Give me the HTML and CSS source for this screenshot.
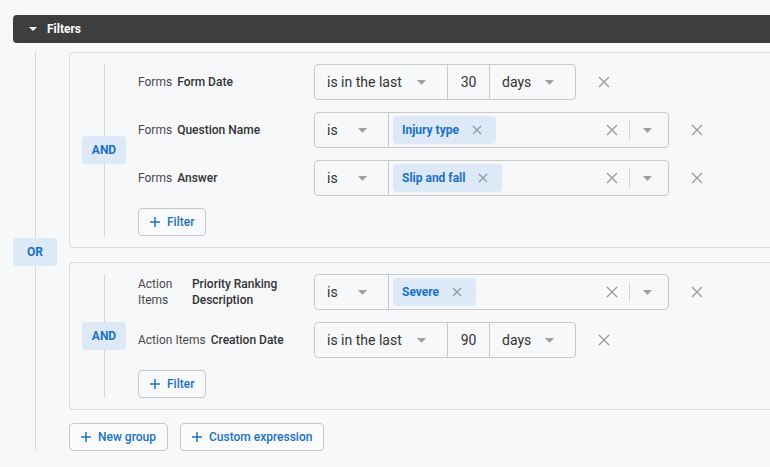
FILE: index.html
```html
<!DOCTYPE html>
<html>
<head>
<meta charset="utf-8">
<link rel="stylesheet" href="styles.css">
</head>
<body>
<div class="page">
  <div class="header">
    <svg class="hcaret" width="8" height="4" viewBox="0 0 8 4"><path d="M0 0h8L4 4z" fill="#fff"/></svg>
    <span>Filters</span>
  </div>
  <div class="main">
    <div class="or-col"><div class="badge">OR</div></div>
    <div class="groups">
      <div class="group">
        <div class="and-col"><div class="badge">AND</div></div>
        <div class="rows">
          <div class="row">
            <div class="label"><span class="ent">Forms</span><span class="fld">Form Date</span></div>
            <div class="controls">
              <div class="box sel w-last"><span class="val">is in the last</span><svg class="caret" width="9" height="5" viewBox="0 0 9 5"><path d="M0 0h9L4.5 5z"/></svg></div>
              <div class="box num">30</div>
              <div class="box sel w-days"><span class="val">days</span><svg class="caret" width="9" height="5" viewBox="0 0 9 5"><path d="M0 0h9L4.5 5z"/></svg></div>
            </div>
            <svg class="remove" width="12" height="12" viewBox="0 0 12 12"><path d="M1 1l10 10M11 1L1 11"/></svg>
          </div>
          <div class="row">
            <div class="label"><span class="ent">Forms</span><span class="fld">Question Name</span></div>
            <div class="controls">
              <div class="box sel w-is"><span class="val">is</span><svg class="caret" width="9" height="5" viewBox="0 0 9 5"><path d="M0 0h9L4.5 5z"/></svg></div>
              <div class="box multi">
                <div class="tag"><span>Injury type</span><svg class="tagx" width="10" height="10" viewBox="0 0 10 10"><path d="M1 1l8 8M9 1L1 9"/></svg></div>
                <div class="spacer"></div>
                <svg class="clear" width="12" height="12" viewBox="0 0 12 12"><path d="M1 1l10 10M11 1L1 11"/></svg>
                <div class="divider"></div>
                <svg class="caret mcaret" width="9" height="5" viewBox="0 0 9 5"><path d="M0 0h9L4.5 5z"/></svg>
              </div>
            </div>
            <svg class="remove" width="12" height="12" viewBox="0 0 12 12"><path d="M1 1l10 10M11 1L1 11"/></svg>
          </div>
          <div class="row">
            <div class="label"><span class="ent">Forms</span><span class="fld">Answer</span></div>
            <div class="controls">
              <div class="box sel w-is"><span class="val">is</span><svg class="caret" width="9" height="5" viewBox="0 0 9 5"><path d="M0 0h9L4.5 5z"/></svg></div>
              <div class="box multi">
                <div class="tag"><span>Slip and fall</span><svg class="tagx" width="10" height="10" viewBox="0 0 10 10"><path d="M1 1l8 8M9 1L1 9"/></svg></div>
                <div class="spacer"></div>
                <svg class="clear" width="12" height="12" viewBox="0 0 12 12"><path d="M1 1l10 10M11 1L1 11"/></svg>
                <div class="divider"></div>
                <svg class="caret mcaret" width="9" height="5" viewBox="0 0 9 5"><path d="M0 0h9L4.5 5z"/></svg>
              </div>
            </div>
            <svg class="remove" width="12" height="12" viewBox="0 0 12 12"><path d="M1 1l10 10M11 1L1 11"/></svg>
          </div>
          <div class="btn-row">
            <button class="btn"><svg class="plus" width="10" height="10" viewBox="0 0 10 10"><path d="M5 0v10M0 5h10"/></svg><span>Filter</span></button>
          </div>
        </div>
      </div>

      <div class="group">
        <div class="and-col"><div class="badge">AND</div></div>
        <div class="rows">
          <div class="row">
            <div class="label"><span class="ent">Action Items</span><span class="fld">Priority Ranking Description</span></div>
            <div class="controls">
              <div class="box sel w-is"><span class="val">is</span><svg class="caret" width="9" height="5" viewBox="0 0 9 5"><path d="M0 0h9L4.5 5z"/></svg></div>
              <div class="box multi">
                <div class="tag"><span>Severe</span><svg class="tagx" width="10" height="10" viewBox="0 0 10 10"><path d="M1 1l8 8M9 1L1 9"/></svg></div>
                <div class="spacer"></div>
                <svg class="clear" width="12" height="12" viewBox="0 0 12 12"><path d="M1 1l10 10M11 1L1 11"/></svg>
                <div class="divider"></div>
                <svg class="caret mcaret" width="9" height="5" viewBox="0 0 9 5"><path d="M0 0h9L4.5 5z"/></svg>
              </div>
            </div>
            <svg class="remove" width="12" height="12" viewBox="0 0 12 12"><path d="M1 1l10 10M11 1L1 11"/></svg>
          </div>
          <div class="row">
            <div class="label"><span class="ent">Action Items</span><span class="fld">Creation Date</span></div>
            <div class="controls">
              <div class="box sel w-last"><span class="val">is in the last</span><svg class="caret" width="9" height="5" viewBox="0 0 9 5"><path d="M0 0h9L4.5 5z"/></svg></div>
              <div class="box num">90</div>
              <div class="box sel w-days"><span class="val">days</span><svg class="caret" width="9" height="5" viewBox="0 0 9 5"><path d="M0 0h9L4.5 5z"/></svg></div>
            </div>
            <svg class="remove" width="12" height="12" viewBox="0 0 12 12"><path d="M1 1l10 10M11 1L1 11"/></svg>
          </div>
          <div class="btn-row">
            <button class="btn"><svg class="plus" width="10" height="10" viewBox="0 0 10 10"><path d="M5 0v10M0 5h10"/></svg><span>Filter</span></button>
          </div>
        </div>
      </div>

      <div class="actions">
        <button class="btn"><svg class="plus" width="10" height="10" viewBox="0 0 10 10"><path d="M5 0v10M0 5h10"/></svg><span>New group</span></button>
        <button class="btn"><svg class="plus" width="10" height="10" viewBox="0 0 10 10"><path d="M5 0v10M0 5h10"/></svg><span>Custom expression</span></button>
      </div>
    </div>
  </div>
</div>
</body>
</html>
```
FILE: styles.css
```css
html, body {
  margin: 0;
  padding: 0;
  overflow: hidden;
  background: #f7f8fa;
}
body {
  font-family: Roboto, "Liberation Sans", Arial, sans-serif;
  color: #333;
}
.page {
  width: 820px;
  padding: 15px 0 0 13px;
}
.header {
  height: 28px;
  background: #3d3e40;
  border-radius: 4px 0 0 4px;
  display: flex;
  align-items: center;
  color: #fff;
  font-size: 12px;
  font-weight: 700;
  padding-left: 16px;
}
.hcaret {
  margin-right: 10px;
}
.main {
  display: flex;
  gap: 12px;
  margin-top: 9px;
}
.or-col {
  width: 44px;
  flex: none;
  display: flex;
  align-items: center;
  justify-content: center;
  background: linear-gradient(#d5d6d8, #d5d6d8) center / 1px 100% no-repeat;
}
.badge {
  width: 44px;
  height: 28px;
  border-radius: 4px;
  background: #dde9f6;
  color: #1a71c6;
  font-size: 12px;
  font-weight: 700;
  display: flex;
  align-items: center;
  justify-content: center;
}
.groups {
  flex: 1;
  display: flex;
  flex-direction: column;
  gap: 13px;
}
.group + .group {
  margin-top: 1px;
}
.group {
  border: 1px solid #dbdcde;
  border-right: none;
  border-radius: 4px 0 0 4px;
  padding: 11px 0 11px 12px;
  display: flex;
  gap: 12px;
}
.and-col {
  width: 44px;
  flex: none;
  display: flex;
  align-items: center;
  background: linear-gradient(#d5d6d8, #d5d6d8) center / 1px 100% no-repeat;
}
.rows {
  display: flex;
  flex-direction: column;
  gap: 12px;
}
.row {
  display: flex;
  align-items: center;
  height: 36px;
}
.label {
  width: 162px;
  margin-right: 14px;
  display: flex;
  align-items: center;
  gap: 5px;
  font-size: 12px;
  line-height: 16px;
}
.ent {
  color: #4a4a4a;
}
.fld {
  color: #333;
  font-weight: 500;
}
.controls {
  display: flex;
  height: 36px;
}
.box {
  box-sizing: border-box;
  height: 36px;
  border: 1px solid #c8c9cb;
  display: flex;
  align-items: center;
  font-size: 14px;
  color: #333;
}
.box + .box {
  margin-left: -1px;
}
.box:first-child {
  border-radius: 4px 0 0 4px;
}
.box:last-child {
  border-radius: 0 4px 4px 0;
}
.sel {
  padding: 0 21px 0 12px;
  justify-content: space-between;
}
.w-last { width: 134px; }
.w-days { width: 87px; }
.w-is { width: 75px; }
.num {
  width: 43px;
  justify-content: center;
}
.caret path {
  fill: #9e9fa1;
}
.multi {
  width: 281px;
  padding: 0 16px 0 4px;
}
.tag {
  height: 28px;
  border-radius: 4px;
  background: #dde9f6;
  color: #1a71c6;
  font-size: 12px;
  font-weight: 700;
  display: flex;
  align-items: center;
  padding: 0 14px 0 9px;
}
.tagx {
  margin-left: 13px;
}
.tagx path {
  stroke: #8d99a6;
  stroke-width: 1.3;
}
.spacer {
  flex: 1;
}
.clear path, .remove path {
  stroke: #9c9da0;
  stroke-width: 1.4;
}
.clear {
  margin-right: 11px;
}
.divider {
  width: 1px;
  height: 20px;
  background: #d3d4d6;
}
.mcaret {
  margin-left: 13px;
}
.remove {
  margin-left: 22px;
}
.btn-row {
  display: flex;
}
.btn {
  height: 28px;
  box-sizing: border-box;
  border: 1px solid #c6c7c9;
  border-radius: 4px;
  background: #f9fafb;
  display: flex;
  align-items: center;
  gap: 7px;
  padding: 0 11px;
  font-family: inherit;
  font-size: 12px;
  font-weight: 500;
  color: #1a71c6;
  cursor: pointer;
}
.plus path {
  stroke: #1a71c6;
  stroke-width: 1.5;
}
.actions {
  display: flex;
  gap: 12px;
}
```
